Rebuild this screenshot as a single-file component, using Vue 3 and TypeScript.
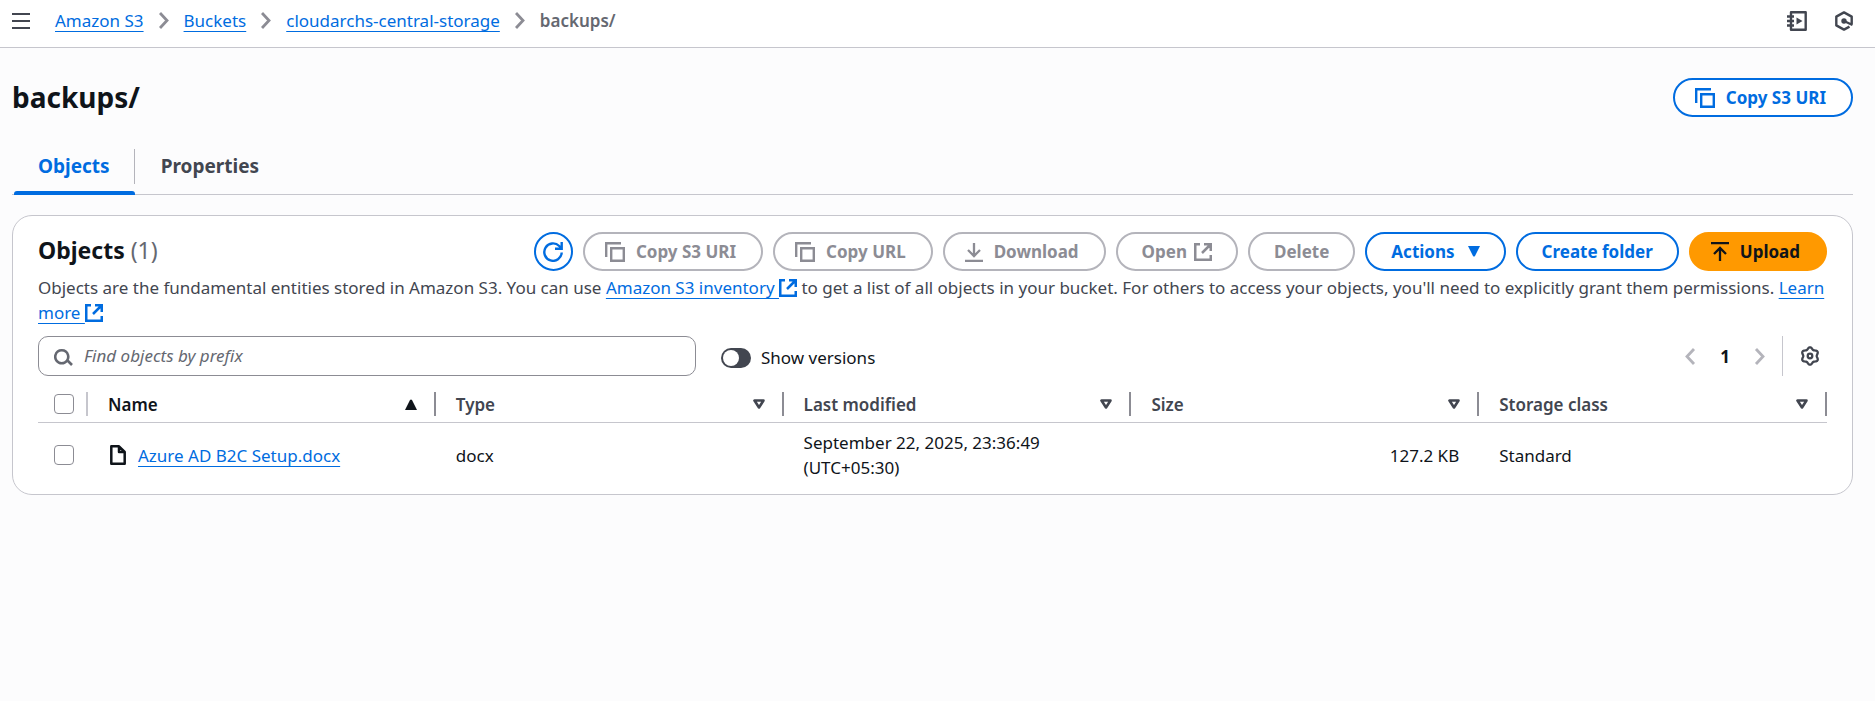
<script setup lang="ts">
import { h, ref, type FunctionalComponent } from 'vue'

interface Shape { w: number; h: number; d?: string; fill?: string; sw?: number; round?: boolean }

function lobes(center: number, radius: number, depth: number): string {
  const points = Array.from({ length: 72 }, (_, i) => {
    const a = (i * Math.PI) / 36
    const r = radius - depth * Math.cos(6 * a)
    return `${(center + r * Math.cos(a)).toFixed(2)} ${(center + r * Math.sin(a)).toFixed(2)}`
  })
  return `M${points.join('L')}Z`
}

const shapes: Record<string, Shape> = {
  menu: { w: 18, h: 16, d: 'M0 1h18M0 8h18M0 15h18', sw: 2 },
  crumb: { w: 10, h: 17, d: 'M1 1l7 7.500-7 7.500', sw: 2.8 },
  prev: { w: 11, h: 17, d: 'M9 1L2 8.500l7 7.500', sw: 2.8 },
  next: { w: 11, h: 17, d: 'M2 1l7 7.500-7 7.500', sw: 2.8 },
  copy: { w: 20, h: 20, d: 'M1.200 15V1.200h14.800M6.200 6.200h12.600v12.600H6.200z', sw: 2.4 },
  external: { w: 18, h: 18, d: 'M6 1.250H1.250v15.500h15.500V12M10 1.250h6.750V8M16.500 1.500L8 10', sw: 2.5 },
  refresh: { w: 20, h: 20, d: 'M18.700 10.500a8.700 8.700 0 1 1-2.500-6.500L18.500 6.200M18.700 0v6.700H12', sw: 2.4 },
  download: { w: 18, h: 20, d: 'M9 1v12.500M3 8l6 6 6-6M0 18.800h18', sw: 2.3 },
  upload: { w: 18, h: 20, d: 'M9 19V6.500M3 12l6-6 6 6M0 1.200h18', sw: 2.3 },
  caret: { w: 12, h: 11, fill: 'M0 0h12L7 10q-1 1-2 0z' },
  asc: { w: 12, h: 11, fill: 'M0 11h12L7 1q-1-1-2 0z' },
  sort: { w: 12, h: 11, d: 'M1.500 1.500h9L6 8.500z', sw: 2.6, round: true },
  search: { w: 19, h: 19, d: 'M14 8A6.500 6.500 0 1 1 1.500 8a6.500 6.500 0 0 1 12.500 0zM12.500 12.500l5.500 5.500', sw: 2.6 },
  file: { w: 16, h: 20, d: 'M1.300 1.300h7.700l5.700 5.700v11.700H1.300zM9 1.300V7h5.700', sw: 2.5, round: true },
  notebook: { w: 20, h: 20, d: 'M4 4.500V1.300h14.700v17.400H4v-3.200M4 9V6.500M4 13.500V11M0 5.500h7M0 10h7M0 14.500h7', fill: 'M9.500 6.500v7L15.500 10z', sw: 2.4, round: true },
  hexagon: { w: 18, h: 20, d: 'M16.700 13V5.600L9 1.400 1.300 5.600v8.800L9 18.600l5.500-3M9 10l8.500 4', sw: 2.4, round: true, fill: 'M6.300 10a2.700 2.700 0 1 0 5.400 0a2.700 2.700 0 1 0-5.400 0z' },
  gear: { w: 20, h: 20, d: lobes(10, 7.7, 1) + 'M12.300 10a2.300 2.300 0 1 1-4.600 0a2.300 2.300 0 0 1 4.600 0z', sw: 2.3, round: true },
}

const Icon: FunctionalComponent<{ name: string }> = (props) => {
  const s = shapes[props.name]
  return h('svg', { width: s.w, height: s.h, viewBox: `0 0 ${s.w} ${s.h}`, 'aria-hidden': 'true' }, [
    s.d ? h('path', { d: s.d, fill: 'none', stroke: 'currentColor', 'stroke-width': s.sw, 'stroke-linejoin': s.round ? 'round' : 'miter' }) : null,
    s.fill ? h('path', { d: s.fill, fill: 'currentColor' }) : null,
  ])
}
Icon.props = ['name']

const crumbs = ['Amazon S3', 'Buckets', 'cloudarchs-central-storage']
const columns = ['Name', 'Type', 'Last modified', 'Size', 'Storage class']
const objects = [
  { name: 'Azure AD B2C Setup.docx', type: 'docx', modified: 'September 22, 2025, 23:36:49 (UTC+05:30)', size: '127.2 KB', storage: 'Standard' },
]
const query = ref('')
const versions = ref(false)
</script>

<template>
  <div class="page">
    <header class="topbar">
      <button class="plain" aria-label="Open navigation"><Icon name="menu" /></button>
      <nav class="crumbs" aria-label="Breadcrumbs">
        <template v-for="c in crumbs" :key="c">
          <a href="#" class="link">{{ c }}</a>
          <Icon name="crumb" />
        </template>
        <span class="current">backups/</span>
      </nav>
      <div class="tools">
        <button class="plain" aria-label="Tutorials"><Icon name="notebook" /></button>
        <button class="plain" aria-label="Diagnostics"><Icon name="hexagon" /></button>
      </div>
    </header>

    <main>
      <div class="title">
        <h1>backups/</h1>
        <button class="btn with-icon"><Icon name="copy" />Copy S3 URI</button>
      </div>

      <div class="tabs" role="tablist">
        <button class="tab active" role="tab" aria-selected="true">Objects</button>
        <button class="tab" role="tab" aria-selected="false">Properties</button>
      </div>

      <section class="card">
        <div class="card-head">
          <h2>Objects <span>(1)</span></h2>
          <div class="actions">
            <button class="btn round" aria-label="Refresh"><Icon name="refresh" /></button>
            <button class="btn with-icon" disabled><Icon name="copy" />Copy S3 URI</button>
            <button class="btn with-icon" disabled><Icon name="copy" />Copy URL</button>
            <button class="btn with-icon" disabled><Icon name="download" />Download</button>
            <button class="btn tight" disabled>Open<Icon name="external" /></button>
            <button class="btn" disabled>Delete</button>
            <button class="btn caret">Actions<Icon name="caret" /></button>
            <button class="btn">Create folder</button>
            <button class="btn with-icon primary"><Icon name="upload" />Upload</button>
          </div>
        </div>
        <p class="intro">Objects are the fundamental entities stored in Amazon S3. You can use <a href="#" class="ext"><span class="link">Amazon S3 inventory&nbsp;</span><Icon name="external" /></a> to get a list of all objects in your bucket. For others to access your objects, you'll need to explicitly grant them permissions. <a href="#" class="ext"><span class="link">Learn more&nbsp;</span><Icon name="external" /></a></p>

        <div class="filters">
          <label class="search">
            <Icon name="search" />
            <input v-model="query" type="text" placeholder="Find objects by prefix" aria-label="Find objects by prefix" />
          </label>
          <label class="toggle">
            <input v-model="versions" type="checkbox" role="switch" />
            <span>Show versions</span>
          </label>
          <div class="pager">
            <button class="plain faded" aria-label="Previous page" disabled><Icon name="prev" /></button>
            <button class="plain page-no" aria-current="page">1</button>
            <button class="plain faded" aria-label="Next page" disabled><Icon name="next" /></button>
            <button class="plain settings" aria-label="Preferences"><Icon name="gear" /></button>
          </div>
        </div>

        <table>
          <thead>
            <tr>
              <th class="pick"><div class="cell"><input type="checkbox" aria-label="Select all objects" /></div></th>
              <th v-for="(c, i) in columns" :key="c" :class="{ sorted: i === 0 }">
                <div class="cell"><span>{{ c }}</span><Icon :name="i === 0 ? 'asc' : 'sort'" /></div>
              </th>
            </tr>
          </thead>
          <tbody>
            <tr v-for="o in objects" :key="o.name">
              <td class="pick"><div class="cell"><input type="checkbox" :aria-label="'Select ' + o.name" /></div></td>
              <td><div class="file"><Icon name="file" /><a href="#" class="link">{{ o.name }}</a></div></td>
              <td>{{ o.type }}</td>
              <td>{{ o.modified }}</td>
              <td class="size">{{ o.size }}</td>
              <td>{{ o.storage }}</td>
            </tr>
          </tbody>
        </table>
      </section>
    </main>
  </div>
</template>

<style>
body { background: #fcfcfd; }
</style>

<style scoped>
.page { font-family: "Noto Sans", sans-serif; font-size: 17px; line-height: 25px; color: #0f141a; }
.page * { box-sizing: border-box; }
svg { display: block; flex: none; }
button, input { font: inherit; color: inherit; margin: 0; }
.plain { border: 0; background: none; padding: 0; color: #424650; display: flex; align-items: center; }
.link { color: #006ce0; text-decoration: underline; text-decoration-thickness: 1px; text-underline-offset: 4px; text-decoration-skip-ink: none; }
.topbar { display: flex; align-items: center; height: 48px; padding: 0 22px 6px 12px; background: #fff; border-bottom: 1px solid #c6c6cd; }
.crumbs { display: flex; align-items: center; gap: 15px; margin-left: 25px; color: #8c8c94; }
.current { color: #656871; font-weight: 600; }
.tools { display: flex; gap: 28px; margin-left: auto; }
main { padding: 30px 22px 0 12px; }
.title { display: flex; align-items: center; justify-content: space-between; }
h1 { margin: 0; font-size: 28px; line-height: 39px; font-weight: 700; }
.btn { display: flex; align-items: center; justify-content: center; height: 39px; padding: 0 24px; border: 2px solid #006ce0; border-radius: 20px; background: #fff; color: #006ce0; font-weight: 700; white-space: nowrap; }
.btn:disabled { border-color: #b4b4bb; color: #8c8c94; }
.with-icon { gap: 11px; padding: 0 25px 0 20px; }
.round { width: 39px; padding: 0; }
.tight { gap: 7px; }
.caret { gap: 13px; }
.primary { background: #ff9900; border-color: #ff9900; color: #0f141a; }
.tabs { display: flex; margin-top: 25px; border-bottom: 1px solid #c6c6cd; }
.tab { position: relative; height: 52px; padding: 0 25px 4px 26px; border: 0; background: none; font-size: 19px; font-weight: 700; color: #424650; }
.active { color: #006ce0; }
.active::before { content: ""; position: absolute; right: 0; top: 7px; height: 35px; width: 1px; background: #b4b4bb; }
.active::after { content: ""; position: absolute; left: 2px; right: 0; bottom: -1px; height: 4px; border-radius: 3px 3px 0 0; background: #006ce0; }
.card { margin-top: 20px; padding: 16px 25px 7px; border: 1px solid #c6c6cd; border-radius: 20px; background: #fff; }
.card-head { display: flex; align-items: flex-start; justify-content: space-between; }
h2 { margin: 0; font-size: 23px; line-height: 37px; font-weight: 700; }
h2 span { color: #656871; font-weight: 400; }
.actions { display: flex; gap: 10px; }
.intro { margin: 4px 0 0; color: #424650; }
.ext { color: #006ce0; text-decoration: none; }
.ext svg { display: inline-block; vertical-align: -3px; }
.filters { display: flex; align-items: center; margin-top: 11px; }
.search { display: flex; align-items: center; gap: 11px; flex: 0 1 658px; height: 40px; padding: 0 15px; border: 1px solid #8c8c94; border-radius: 10px; color: #656871; }
.search input { flex: 1; border: 0; outline: 0; padding: 0 0 2px; background: none; }
.search input::placeholder { color: #656871; font-style: italic; opacity: 1; }
.toggle { display: flex; align-items: center; gap: 10px; margin-left: 25px; padding-top: 3px; }
.toggle input { appearance: none; position: relative; width: 30px; height: 20px; border-radius: 10px; background: #424650; }
.toggle input::after { content: ""; position: absolute; left: 2px; top: 2px; width: 16px; height: 16px; border-radius: 8px; background: #fff; }
.pager { display: flex; align-items: center; margin-left: auto; }
.faded { color: #b4b4bb; }
.page-no { padding: 0 24px; color: #0f141a; font-weight: 700; }
.settings { height: 40px; margin-left: 17px; padding: 0 7px 0 17px; border-left: 1px solid #c6c6cd; }
table { width: 100%; margin-top: 11px; border-collapse: separate; border-spacing: 0; table-layout: fixed; }
th { padding: 5px 0 6px; border-bottom: 1px solid #c6c6cd; text-align: left; font-weight: 600; color: #424650; }
th .cell { display: flex; align-items: center; justify-content: space-between; height: 24px; padding: 0 17px 0 20px; border-right: 2px solid #8c8c94; }
.sorted { color: #0f141a; }
.pick { width: 50px; }
th.pick .cell, .pick .cell { padding: 0 0 0 16px; border-color: #c6c6cd; }
.pick input { appearance: none; display: block; width: 20px; height: 20px; border: 1px solid #8c8c94; border-radius: 4px; background: #fff; }
td { padding: 7px 20px; vertical-align: middle; }
td.pick { padding: 0; }
td.size { text-align: right; }
.file { display: flex; align-items: center; gap: 12px; padding-left: 2px; }
</style>
